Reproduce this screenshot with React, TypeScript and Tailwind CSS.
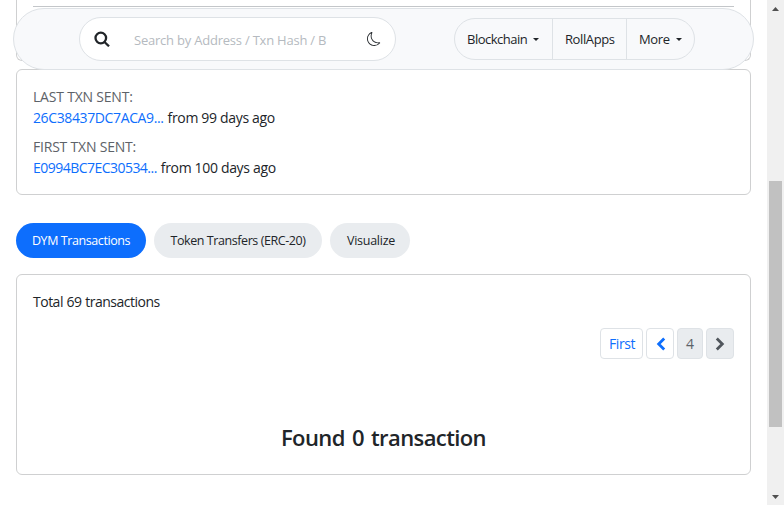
import type { ReactNode } from "react";

type TxnProps = { label: string; hash: string; age: string; hashClass: string };

function LastTxn({ label, hash, age, hashClass }: TxnProps) {
  return (
    <div className="leading-[21px]">
      <div className="tracking-[-0.21px] text-[#5d6268]">{label}</div>
      <div className="flex gap-1">
        <a className={`text-[#0d6efd] ${hashClass}`}>{hash}</a>
        <span className="tracking-[-0.33px]">{age}</span>
      </div>
    </div>
  );
}

function Caret() {
  return <span className="-mt-px ml-1.5 border-x-[3.5px] border-t-[3.5px] border-x-transparent border-t-[#212529]" />;
}

function PageButton({ className, children }: { className: string; children: ReactNode }) {
  return (
    <button className={`flex h-[31px] items-center justify-center rounded-[4px] border border-[#dee2e6] ${className}`}>
      {children}
    </button>
  );
}

function Header() {
  return (
    <header className="absolute left-[13px] top-2 flex h-[62px] w-[741px] items-start rounded-full border border-[#dee2e6] bg-[#f8f9fb] pl-[65px]">
      <div className="mt-2 flex h-11 w-[317px] items-center rounded-[22px] border border-[#dee2e6] bg-white pl-[14px]">
        <svg width="16" height="16" viewBox="0 0 16 16" fill="none" stroke="#212529" strokeWidth="2.3">
          <circle cx="6.8" cy="7" r="5.3" />
          <path d="M10.5 11 15 15.3" />
        </svg>
        <span className="ml-6 mt-[3px] w-[193px] whitespace-nowrap text-[13px] tracking-[-0.22px] text-[#b5bac0]">
          Search by Address / Txn Hash / B
        </span>
        <svg className="ml-10" width="14" height="14" viewBox="0 0 16 16" fill="#212529">
          <path d="M6 .278a.77.77 0 0 1 .08.858 7.2 7.2 0 0 0-.878 3.46c0 4.021 3.278 7.277 7.318 7.277q.792-.001 1.533-.16a.79.79 0 0 1 .81.316.73.73 0 0 1-.031.893A8.35 8.35 0 0 1 8.344 16C3.734 16 0 12.286 0 7.71 0 4.266 2.114 1.312 5.124.06A.75.75 0 0 1 6 .278M4.858 1.311A7.27 7.27 0 0 0 1.025 7.71c0 4.02 3.279 7.276 7.319 7.276a7.32 7.32 0 0 0 5.205-2.162q-.506.063-1.029.063c-4.61 0-8.343-3.714-8.343-8.29 0-1.167.242-2.278.681-3.286" />
        </svg>
      </div>
      <nav className="ml-[58px] mt-[9px] flex h-[42px] w-[241px] rounded-[21px] border border-[#dee2e6] text-[13px] tracking-[-0.5px] text-[#212529]">
        <a className="flex w-[98px] items-center border-r border-[#dee2e6] pl-3 pt-px">Blockchain<Caret /></a>
        <a className="flex w-[74px] items-center border-r border-[#dee2e6] pl-3 pt-px tracking-[-0.4px]">RollApps</a>
        <a className="flex items-center pl-3 pt-px tracking-[-0.4px]">More<Caret /></a>
      </nav>
    </header>
  );
}

function Scrollbar() {
  return (
    <div className="flex w-[17px] flex-col items-center bg-[#f0f0f0]">
      <svg width="17" height="17" fill="#505050"><path d="M5 11 8.5 7 12 11Z" /></svg>
      <div className="mt-[164px] h-[246px] w-[13px] bg-[#c1c1c1]" />
      <svg className="mt-auto" width="17" height="17" fill="#505050"><path d="M5 7 8.5 11 12 7Z" /></svg>
    </div>
  );
}

export default function App() {
  return (
    <div className="relative flex h-[505px] w-[784px] overflow-hidden bg-white font-['Open_Sans','Noto_Sans',sans-serif] text-[14px] text-[#212529]">
      <main className="flex-1 px-4">
        <section className="h-[61px] rounded-b-[6px] border border-t-0 border-[#cfd0d1] px-4 pt-1.5">
          <div className="h-px bg-[#c3c6c9]" />
        </section>
        <section className="mt-2 flex h-[126px] flex-col gap-2 rounded-[6px] border border-[#cfd0d1] px-4 pt-4">
          <LastTxn label="LAST TXN SENT:" hash="26C38437DC7ACA9..." age="from 99 days ago" hashClass="tracking-[-0.38px]" />
          <LastTxn label="FIRST TXN SENT:" hash="E0994BC7EC30534..." age="from 100 days ago" hashClass="tracking-[-0.53px]" />
        </section>
        <div className="mt-7 flex h-[35px] gap-2 text-[12.5px] tracking-[-0.42px]">
          <button className="w-[130px] rounded-full bg-[#0d6efd] pt-px text-white">DYM Transactions</button>
          <button className="w-[168px] rounded-full bg-[#e9ecef] pt-px">Token Transfers (ERC-20)</button>
          <button className="w-20 rounded-full bg-[#e9ecef] pl-0.5 pt-px tracking-[-0.25px]">Visualize</button>
        </div>
        <section className="mt-4 h-[201px] rounded-[6px] border border-[#cfd0d1] px-4 pt-4">
          <p className="leading-[21px] tracking-[-0.5px] [word-spacing:0.5px]">Total 69 transactions</p>
          <div className="mt-4 flex justify-end gap-[3px]">
            <PageButton className="w-[43px] pl-px tracking-[-0.4px] text-[#0d6efd]">First</PageButton>
            <PageButton className="w-7 pl-0.5 text-[#0d6efd]">
              <svg width="10" height="14" viewBox="0 0 10 14" fill="none" stroke="currentColor" strokeWidth="2.8"><path d="M8.2 1.5 2.7 7l5.5 5.5" /></svg>
            </PageButton>
            <PageButton className="w-[26px] bg-[#e9ecef] text-[#5d6268]">4</PageButton>
            <PageButton className="w-7 bg-[#e9ecef] text-[#50565c]">
              <svg width="10" height="14" viewBox="0 0 10 14" fill="none" stroke="currentColor" strokeWidth="2.8"><path d="M1.8 1.5 7.3 7l-5.5 5.5" /></svg>
            </PageButton>
          </div>
          <h2 className="mt-16 text-center text-[22px] font-semibold leading-[28px] tracking-[-0.6px] [word-spacing:2px]">Found 0 transaction</h2>
        </section>
      </main>
      <Scrollbar />
      <Header />
    </div>
  );
}
